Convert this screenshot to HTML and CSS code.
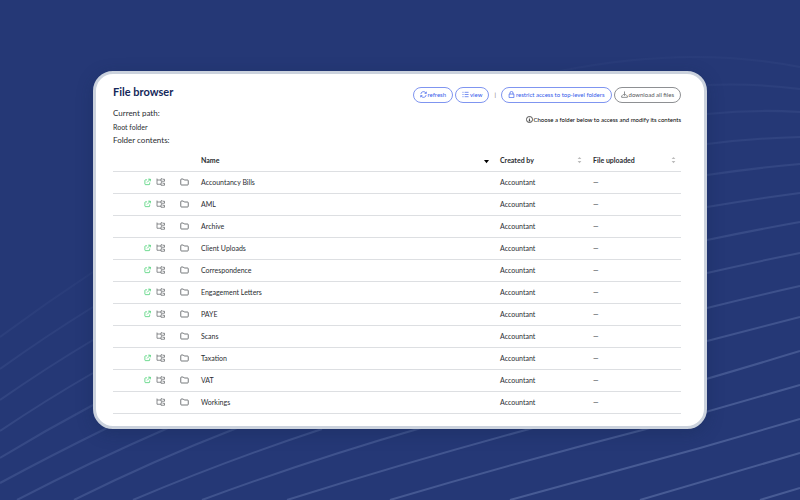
FILE: index.html
```
<!DOCTYPE html>
<html lang="en">
<head>
    <meta charset="UTF-8">
    <meta name="viewport" content="width=device-width, initial-scale=1.0">
    <title>File browser</title>
    <link rel="stylesheet" href="styles.css">
</head>
<body>
    <svg class="backdrop" viewBox="0 0 800 500" preserveAspectRatio="xMidYMid slice" aria-hidden="true">
        <defs>
            <linearGradient id="fade" gradientUnits="userSpaceOnUse" x1="400" y1="170" x2="505" y2="498">
                <stop offset="0" stop-color="#8a9fd0" stop-opacity="0.04"/>
                <stop offset="1" stop-color="#8a9fd0" stop-opacity="0.34"/>
            </linearGradient>
        </defs>
        <g fill="none" stroke="url(#fade)" stroke-width="2">
            <path d="M0 337Q46 303 93 272"/>
            <path d="M0 369Q46 336 93 307"/>
            <path d="M0 400Q46 368 93 340"/>
            <path d="M0 431Q46 400 93 373"/>
            <path d="M0 458Q46 430 93 405"/>
            <path d="M0 483Q50 456 107 428"/>
            <path d="M17 500Q90 462 168 428"/>
            <path d="M74 500Q152 461 237 428"/>
            <path d="M133 500Q225 461 322 429"/>
            <path d="M202 500Q310 460 421 428"/>
            <path d="M287 500Q408 462 533 428T800 351"/>
            <path d="M390 500Q518 462 650 428L800 385"/>
            <path d="M510 500L700 448L800 419"/>
            <path d="M640 500L800 453"/>
            <path d="M760 500L800 488"/>
            <path d="M560 71Q690 45 800 67"/>
            <path d="M707 85Q755 83 800 89"/>
            <path d="M707 114Q754 109 800 112"/>
            <path d="M707 144Q755 138 800 137"/>
            <path d="M707 175Q755 168 800 164"/>
            <path d="M707 207Q755 199 800 193"/>
            <path d="M707 240Q755 230 800 222"/>
            <path d="M707 273Q755 262 800 253"/>
            <path d="M707 308Q755 296 800 286"/>
            <path d="M707 341L800 317"/>
        </g>
    </svg>

    <!-- Icons shared by the toolbar and the table rows -->
    <svg class="sprite" aria-hidden="true">
        <symbol id="i-open" viewBox="0 0 16 16">
            <path d="M7 3H3.500Q2 3 2 4.500V12.500Q2 14 3.500 14H11.500Q13 14 13 12.500V9M9.500 1.500H14.500V6.500M14.500 1.500L7 9"/>
        </symbol>
        <symbol id="i-tree" viewBox="0 0 18 16">
            <path d="M2 1V12.500H10M2 4H10M10 1.500H12.500L13.500 2.500H17V6.500H10ZM10 9.500H12.500L13.500 10.500H17V14.500H10Z"/>
        </symbol>
        <symbol id="i-folder" viewBox="0 0 18 16">
            <path d="M1.500 3.500Q1.500 2 3 2H6.500L8.500 4H15Q16.500 4 16.500 5.500V12.500Q16.500 14 15 14H3Q1.500 14 1.500 12.500Z"/>
        </symbol>
        <symbol id="i-refresh" viewBox="0 0 16 16">
            <path d="M2 7A6 6 0 0 1 13.500 5M14.500 1.500V5.500H10.500M14 9A6 6 0 0 1 2.500 11M1.500 14.500V10.500H5.500"/>
        </symbol>
        <symbol id="i-list" viewBox="0 0 16 16">
            <path d="M1 3H3.500M1 8H3.500M1 13H3.500M6 3H15M6 8H15M6 13H15"/>
        </symbol>
        <symbol id="i-lock" viewBox="0 0 16 16">
            <path d="M2.500 7H13.500V15H2.500ZM4.500 7V4.500A3.500 3.500 0 0 1 11.500 4.500V7"/>
        </symbol>
        <symbol id="i-download" viewBox="0 0 16 16">
            <path d="M8 1V10M5 7L8 10L11 7M4 9.500L1.500 11V14.500H14.500V11L12 9.500"/>
        </symbol>
        <symbol id="i-info" viewBox="0 0 16 16">
            <circle cx="8" cy="8" r="7"/>
            <path d="M8 4V5.500M6.500 7.500H8V11.500M6 11.500H10"/>
        </symbol>
        <symbol id="i-sort" viewBox="0 0 8 12">
            <path d="M1 4.500L4 1L7 4.500ZM1 7.500L4 11L7 7.500Z"/>
        </symbol>
        <symbol id="i-down" viewBox="0 0 8 12">
            <path d="M0 6H8L4 11Z"/>
        </symbol>
    </svg>

    <main class="card">
        <header class="top">
            <h1>File browser</h1>
            <div class="toolbar">
                <button type="button" class="btn"><svg class="icon"><use href="#i-refresh"/></svg>refresh</button>
                <button type="button" class="btn"><svg class="icon"><use href="#i-list"/></svg>view</button>
                <span class="divider">|</span>
                <button type="button" class="btn"><svg class="icon"><use href="#i-lock"/></svg>restrict access to top-level folders</button>
                <button type="button" class="btn btn-grey"><svg class="icon"><use href="#i-download"/></svg>download all files</button>
            </div>
        </header>

        <section class="path">
            <div>
                <h2>Current path:</h2>
                <p class="crumb">Root folder</p>
                <h2>Folder contents:</h2>
            </div>
            <p class="hint"><svg class="icon"><use href="#i-info"/></svg>Choose a folder below to access and modify its contents</p>
        </section>

        <table id="fileTable">
            <colgroup>
                <col class="col-actions">
                <col class="col-type">
                <col class="col-name">
                <col class="col-created">
                <col class="col-uploaded">
            </colgroup>
            <thead>
                <tr>
                    <th></th>
                    <th></th>
                    <th><button type="button" class="sort">Name<svg class="sort-icon active"><use href="#i-down"/></svg></button></th>
                    <th><button type="button" class="sort">Created by<svg class="sort-icon"><use href="#i-sort"/></svg></button></th>
                    <th><button type="button" class="sort">File uploaded<svg class="sort-icon"><use href="#i-sort"/></svg></button></th>
                </tr>
            </thead>
            <tbody>
                <!-- Folder rows will be populated here -->
            </tbody>
        </table>
    </main>

    <script>
        const folders = [
            { name: "Accountancy Bills", shared: true },
            { name: "AML", shared: true },
            { name: "Archive", shared: false },
            { name: "Client Uploads", shared: true },
            { name: "Correspondence", shared: true },
            { name: "Engagement Letters", shared: true },
            { name: "PAYE", shared: true },
            { name: "Scans", shared: false },
            { name: "Taxation", shared: true },
            { name: "VAT", shared: true },
            { name: "Workings", shared: false }
        ];

        function populateTable() {
            const tbody = document.querySelector("#fileTable tbody");

            for (const folder of folders) {
                const open = folder.shared
                    ? `<button type="button" class="action open" aria-label="Open ${folder.name}"><svg><use href="#i-open"/></svg></button>`
                    : "";
                const row = document.createElement("tr");
                row.innerHTML = `
                    <td><div class="actions">${open}<button type="button" class="action" aria-label="Move ${folder.name}"><svg><use href="#i-tree"/></svg></button></div></td>
                    <td><svg class="folder"><use href="#i-folder"/></svg></td>
                    <td><a href="#">${folder.name}</a></td>
                    <td>Accountant</td>
                    <td>—</td>
                `;
                tbody.appendChild(row);
            }
        }

        populateTable();
    </script>
</body>
</html>
```
FILE: styles.css
```
* {
    box-sizing: border-box;
}

body {
    font-family: Lato, sans-serif;
    font-size: 7px;
    line-height: 8px;
    margin: 0;
    padding: 0 93px;
    min-height: 100vh;
    display: flex;
    align-items: center;
    background: #253876;
    color: #2A2D31;
}

h1, h2, p {
    margin: 0;
}

button {
    font: inherit;
    color: inherit;
    background: none;
    border: 0;
    padding: 0;
    cursor: pointer;
}

svg {
    display: block;
    fill: none;
    stroke: currentColor;
    stroke-width: 1.5;
}

.backdrop {
    position: absolute;
    inset: 0;
    width: 100%;
    height: 100%;
}

.sprite {
    position: absolute;
    width: 0;
    height: 0;
}

.card {
    position: relative;
    flex: 1;
    background: #FFFFFF;
    border: 3px solid #CBD2DD;
    border-radius: 20px;
    padding: 11px 23px 12px 17px;
    box-shadow: 0 4px 16px rgba(20, 40, 80, 0.35);
}

.top {
    display: flex;
    justify-content: space-between;
    align-items: flex-start;
}

h1 {
    font-size: 11px;
    line-height: 14px;
    color: #14285A;
}

.toolbar {
    display: flex;
    align-items: center;
    gap: 2px;
    padding-top: 2px;
    font-size: 6px;
}

.btn {
    display: flex;
    align-items: center;
    gap: 1px;
    height: 16px;
    padding: 0 6px;
    border: 1px solid #7F95F0;
    border-radius: 8px;
    color: #3259EA;
}

.btn-grey {
    border-color: #8E9093;
    color: #55585B;
}

.divider {
    padding: 0 3px;
    color: #666666;
}

.icon {
    width: 7px;
    height: 7px;
}

.path {
    display: flex;
    justify-content: space-between;
    align-items: flex-start;
    padding-top: 4px;
}

h2 {
    font-size: 8px;
    line-height: 12px;
    font-weight: 400;
}

.crumb {
    padding: 4px 0 3px;
}

.hint {
    display: flex;
    align-items: center;
    gap: 1px;
    font-size: 6px;
    padding-top: 9px;
    color: #000000;
}

table {
    width: 100%;
    table-layout: fixed;
    border-collapse: collapse;
    margin-top: 4px;
}

th, td {
    height: 22px;
    padding: 0 0 1px;
    border-bottom: 1px solid #DDDFE2;
    text-align: left;
}

.col-actions {
    width: 67px;
}

.col-type {
    width: 21px;
}

.col-created {
    width: 93px;
}

.col-uploaded {
    width: 88px;
}

.sort {
    display: flex;
    justify-content: space-between;
    align-items: center;
    width: 100%;
    padding-right: 11px;
    font-weight: 700;
}

th:last-child .sort {
    padding-right: 5px;
}

.sort-icon {
    width: 5px;
    height: 8px;
    fill: #BBBBBB;
    stroke: none;
}

.sort-icon.active {
    fill: #000000;
}

.actions {
    display: flex;
    justify-content: flex-end;
    gap: 5px;
    padding-right: 15px;
}

.action {
    color: #66696C;
}

.action svg {
    width: 9px;
    height: 8px;
}

.action.open {
    color: #28C85A;
}

.action.open svg {
    width: 7px;
}

.folder {
    width: 9px;
    height: 8px;
    color: #4A4D50;
}

td a {
    color: inherit;
    text-decoration: none;
}
```
